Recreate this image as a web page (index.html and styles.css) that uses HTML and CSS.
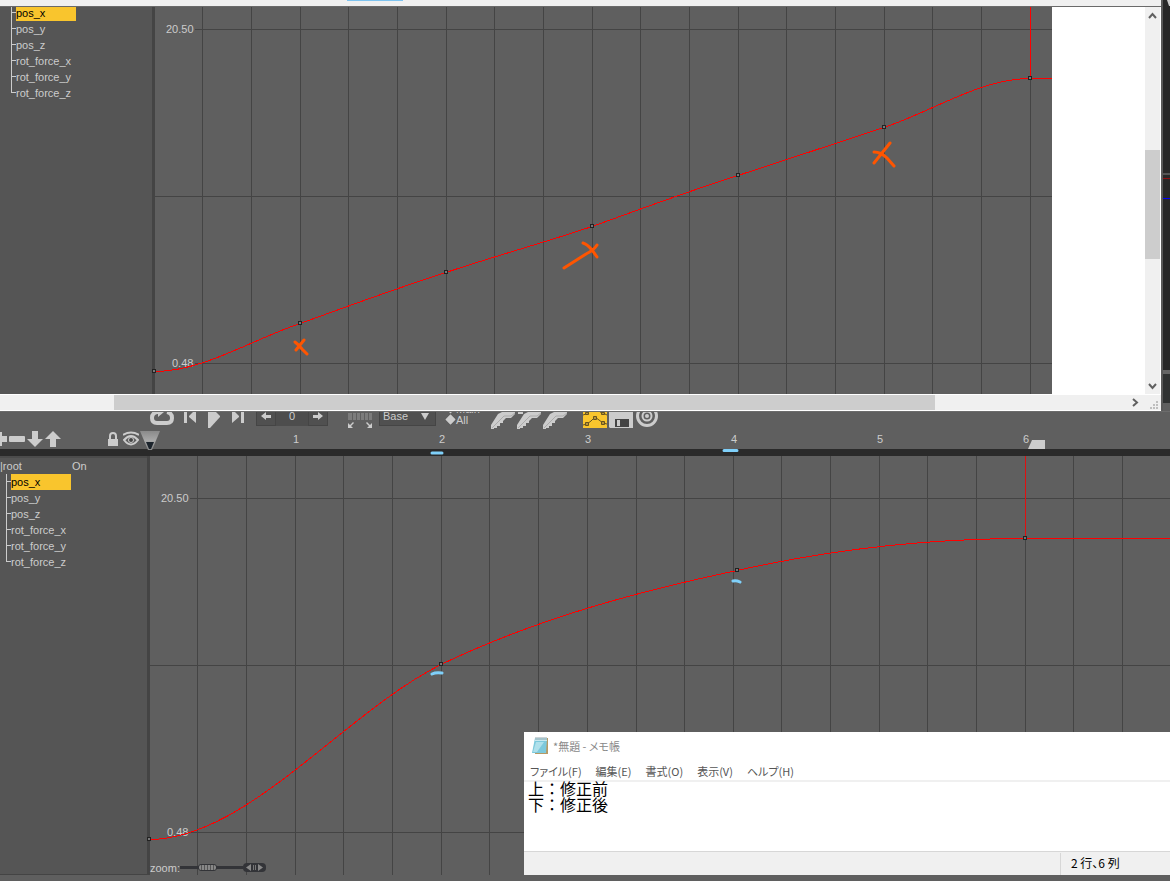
FILE: index.html
```
<!DOCTYPE html>
<html lang="ja">
<head>
  <meta charset="UTF-8" />
  <meta name="viewport" content="width=device-width, initial-scale=1.0"/>
  <title>Curve Editor</title>
  <link rel="stylesheet" href="styles.css">
</head>
<body>

<!-- Upper window -->
<section class="top">
  <div class="viewer">
    <div class="viewer-title"><span class="title-mark"></span></div>
    <div class="viewer-body">
      <ul class="tree tree-upper">
        <li class="selected"><span>pos_x</span></li>
        <li><span>pos_y</span></li>
        <li><span>pos_z</span></li>
        <li><span>rot_force_x</span></li>
        <li><span>rot_force_y</span></li>
        <li><span>rot_force_z</span></li>
      </ul>
      <div class="graph graph-upper">
        <svg class="curves">
          <g transform="translate(-152 -7)">
            <rect class="divider" x="152" y="7" width="3" height="400"/>
            <path class="grid" d="M202.5 7v400M251.5 7v400M300.5 7v400M348.5 7v400M397.5 7v400M446.5 7v400M494.5 7v400M543.5 7v400M592.5 7v400M640.5 7v400M689.5 7v400M738.5 7v400M786.5 7v400M835.5 7v400M884.5 7v400M932.5 7v400M981.5 7v400M1030.5 7v400M195 29.5H3000M155 196.5H3000M195 363.5H3000"/>
            <text x="166" y="33">20.50</text>
            <text x="172" y="367">0.48</text>
            <path class="curve" d="M154 371.5C203 371.5 251 340 300 323.5C349 306 397 288 446 272.5C495 256 543 243 592 226.5C641 209 689 191 738 175.5C787 159 835 144 884 127.5C933 111 981 78.5 1030 78.5H3000M1030.5 7V78"/>
            <path class="key" d="M152.5 369.5h3v3h-3zM298.5 321.5h3v3h-3zM444.5 270.5h3v3h-3zM590.5 224.5h3v3h-3zM736.5 173.5h3v3h-3zM882.5 125.5h3v3h-3zM1028.5 76.5h3v3h-3z"/>
            <path class="pen-orange" d="M295 342Q299 345 302 349L307 354M304 340L296 350M583 243Q587 244 592 250L597 257M597 245Q594 250 586 254L564 268M890 143L874 163M874 152Q881 152 887 158L894 166"/>
          </g>
        </svg>
      </div>
      <div class="blank"></div>
      <div class="vscroll">
        <button class="arrow" aria-label="Scroll up"><svg width="15" height="18"><path d="M4 11l3.5-4L11 11"/></svg></button>
        <div class="vthumb"></div>
        <button class="arrow arrow-end" aria-label="Scroll down"><svg width="15" height="18"><path d="M4 8l3.5 4L11 8"/></svg></button>
      </div>
    </div>
    <div class="hscroll">
      <div class="hthumb"></div>
      <button class="arrow" aria-label="Scroll right"><svg width="18" height="15"><path d="M7 4l4 3.5L7 11"/></svg></button>
      <svg class="grip" width="11" height="11"><path d="M1 8h2v2H1zM4 8h2v2H4zM7 8h2v2H7zM4 5h2v2H4zM7 5h2v2H7zM7 2h2v2H7z"/></svg>
    </div>
  </div>
  <svg class="backdrop">
    <rect width="8" height="403" fill="#282828"/>
    <path d="M4 0h4v6H6z" fill="#ccc"/>
    <rect y="173" width="8" height="2" fill="#555"/>
    <rect y="178" width="8" height="1" fill="#901010"/>
    <rect y="198" width="8" height="1" fill="#0000ff"/>
    <rect y="370" width="8" height="4" fill="#666"/>
    <rect y="374" width="8" height="29" fill="#303232"/>
  </svg>
</section>

<!-- Lower window: playback controls -->
<section class="toolbar">
  <button class="tool loop" aria-label="Loop"><svg width="24" height="20"><path class="thick" d="M8 0H7Q2 1 2 6Q2 11 7 11H17Q22 11 22 6Q22 1 17 0"/><path class="fill" d="M8 5V0h6z"/></svg></button>
  <button class="tool start" aria-label="First frame"><svg width="12" height="20"><path class="fill" d="M0 0h3v11H0zM12 0v11L5 5V4l4-4z"/></svg></button>
  <button class="tool" aria-label="Play"><svg width="12" height="20"><path class="fill" d="M0 0h8l4 4v1L2 16H0z"/></svg></button>
  <button class="tool" aria-label="Last frame"><svg width="12" height="20"><path class="fill" d="M0 0h3l4 4v1l-7 6zM9 0h3v11H9z"/></svg></button>
  <div class="stepper">
    <button aria-label="Previous key"><svg width="20" height="20"><path class="fill" d="M5 9l5-4v3h5v3h-5v2z"/></svg></button>
    <input type="text" value="0" aria-label="Frame">
    <button aria-label="Next key"><svg width="20" height="20"><path class="fill" d="M15 9l-5-4v3H5v3h5v2z"/></svg></button>
  </div>
  <button class="tool fit" aria-label="Fit range"><svg width="24" height="20"><path d="M0 1h4v7H0zM5 1h3v7H5zM9 1h3v7H9zM13 1h3v7h-3zM17 1h3v7h-3zM21 1h3v7h-3z" fill="#7c7c7c"/><path class="fill" d="M0 16v-5l2 2 3-3 1 1-3 3 2 2zM24 16v-5l-2 2-3-3-1 1 3 3-2 2z"/></svg></button>
  <div class="layer">
    <select aria-label="Layer"><option>Base</option></select>
    <svg width="8" height="7"><path class="fill" d="M0 0h8L4 7z"/></svg>
  </div>
  <div class="scope">
    <label><input type="radio" name="scope">Main</label>
    <label><input type="radio" name="scope" checked>All</label>
  </div>
  <button class="tool key-btn" aria-label="Set key"><svg width="24" height="20"><path class="fill" d="M7 2l4-2h13v2l-4 4h-5l-3 3v2H9v3H6v2H3v1H0v-4z"/><path class="edge" d="M1 16L13 4h7l4-3"/></svg></button>
  <button class="tool key-btn" aria-label="Add key"><svg width="24" height="20"><path class="fill" d="M1 0h5v2H1zM7 2l4-2h13v2l-4 4h-5l-3 3v2H9v3H6v2H3v1H0v-4z"/><path class="edge" d="M1 16L13 4h7l4-3"/></svg></button>
  <button class="tool key-btn" aria-label="Delete key"><svg width="24" height="20"><path class="fill" d="M7 2l4-2h13v2l-4 4h-5l-3 3v2H9v3H6v2H3v1H0v-4z"/><path class="edge" d="M1 16L13 4h7l4-3"/></svg></button>
  <button class="tool curve-btn" aria-label="Curve view"><svg width="24" height="20"><rect width="24" height="16" fill="#f9c52d"/><path d="M0 3l3-1 3-2M17 0l3 1 4 2M0 13l4-1 4-3 4-4 4 3 4 3 4 1" fill="none" stroke="#665321"/><path d="M2.5 .5h3v2h-3zM18.5 .5h3v2h-3zM2.500 10.500h3v3h-3zM10.500 4.500h3v3h-3zM18.500 9.500h3v3h-3z" fill="#b99432" stroke="#665321"/></svg></button>
  <button class="tool save-btn" aria-label="Save"><svg width="24" height="20"><path class="fill" d="M0 0h24v16H1l-1-1z"/><path d="M6 7h14v8H6z" fill="#444"/><path class="fill" d="M8 8h3v6H8z"/></svg></button>
  <button class="tool target-btn" aria-label="Target"><svg width="22" height="20"><circle class="ring" cx="11" cy="4" r="9.5"/><circle class="thin" cx="11" cy="4" r="4.5"/><circle class="fill" cx="11" cy="4" r="2"/></svg></button>
</section>

<section class="timeline">
  <div class="track-tools">
    <button class="tool" aria-label="Add"><svg width="7" height="18"><path class="fill" d="M0 1h2v4h5v6H2v4H0z"/></svg></button>
    <button class="tool" aria-label="Remove"><svg width="16" height="18"><rect class="fill" y="5" width="16" height="6" rx="1"/></svg></button>
    <button class="tool" aria-label="Move down"><svg width="16" height="18"><path class="fill" d="M5 0h6v8h5l-8 8-8-8h5z"/></svg></button>
    <button class="tool" aria-label="Move up"><svg width="16" height="18"><path class="fill" d="M8 0l8 8h-5v8H5V8H0z"/></svg></button>
    <button class="tool lock" aria-label="Lock"><svg width="10" height="18"><path class="fill" d="M0 8h10v7H0z"/><path class="thin" d="M2 8V5q0-3 3-3t3 3v3"/></svg></button>
    <button class="tool eye" aria-label="Visible"><svg width="16" height="18"><path class="thin" d="M0 4Q8-1 16 4M1 9Q8 1 15 9Q8 18 1 9z"/><circle cx="8" cy="9" r="2.5" fill="#444" stroke="#ccc"/></svg></button>
  </div>
  <svg class="playhead" width="20" height="21"><defs><linearGradient id="head" x2="0" y2="1"><stop offset="0" stop-color="#8a8a8a"/><stop offset=".5" stop-color="#a8a8a8"/><stop offset="1" stop-color="#888"/></linearGradient></defs><path d="M0 1h20l-8 19H8z" fill="url(#head)"/><path d="M6 12h8l-3 7H9z" fill="#1c242c"/></svg>
  <div class="ruler">
    <span>1</span><span>2</span><span>3</span><span>4</span><span>5</span><span>6</span>
  </div>
  <svg class="range-end" width="17" height="9"><path class="fill" d="M4 0h13v9H0z"/></svg>
</section>

<div class="time-bar">
  <svg width="100%" height="7"><path class="pen-blue" d="M432 4H442M724 1.500H737"/></svg>
</div>

<section class="editor">
  <div class="tree-panel">
    <div class="root-row"><span class="root-name">|root</span><span>On</span></div>
    <ul class="tree tree-lower">
      <li class="selected"><span>pos_x</span></li>
      <li><span>pos_y</span></li>
      <li><span>pos_z</span></li>
      <li><span>rot_force_x</span></li>
      <li><span>rot_force_y</span></li>
      <li><span>rot_force_z</span></li>
    </ul>
  </div>
  <div class="graph graph-lower">
    <svg class="curves">
      <g transform="translate(-147 -456)">
        <rect class="divider" x="147" y="456" width="3" height="2000"/>
        <path class="grid" d="M197.5 456v2000M246.5 456v2000M295.5 456v2000M343.5 456v2000M392.5 456v2000M441.5 456v2000M489.5 456v2000M538.5 456v2000M587.5 456v2000M636.5 456v2000M684.5 456v2000M733.5 456v2000M781.5 456v2000M830.5 456v2000M879.5 456v2000M927.5 456v2000M976.5 456v2000M1025.5 456v2000M1073.5 456v2000M1122.5 456v2000M190 498.5H3000M150 665.5H3000M190 832.5H3000"/>
        <text x="161" y="502">20.50</text>
        <text x="167" y="836">0.48</text>
        <path class="curve" d="M149 839.5C246 839.5 344 713 441 664.5C538 618 640 591 737 570.5C833 549 930 538.5 1025 538.5H3000"/>
        <path class="curve-end" d="M1025.5 456V538"/>
        <path class="key" d="M147.5 837.5h3v3h-3zM439.5 662.5h3v3h-3zM735.5 568.5h3v3h-3zM1023.5 536.5h3v3h-3z"/>
        <path class="pen-blue" d="M432 674Q436 672 442 673M733 581Q736 580 740 582"/>
      </g>
    </svg>
    <div class="zoom">
      <label for="zoom">zoom:</label>
      <input type="range" id="zoom" min="0" max="100" value="42">
      <button aria-label="Pan"><svg width="23" height="9"><rect width="23" height="9" rx="4" fill="#333438"/><path d="M8 1v7L3 4.5zM15 1v7l5-3.5z" fill="#888"/><path d="M10.5 2v5M12.5 2v5" stroke="#777"/></svg></button>
    </div>
  </div>

  <div class="notepad">
    <div class="notepad-title">
      <svg width="16" height="17"><path d="M4 1h12v16H3z" fill="#b59a66"/><path d="M3 1h12l-1 15H0z" fill="#7cc9dc"/><path d="M3 1h12v3H3z" fill="#c8e9f0"/><path d="M4 5h8L5 15H1z" fill="#aee0eb"/><path d="M4 0v3M6 0v3M8 0v3M10 0v3M12 0v3M14 0v3" stroke="#55707a" stroke-width=".6"/></svg>
      <span>*無題 - メモ帳</span>
    </div>
    <div class="notepad-menu">
      <button>ファイル(F)</button>
      <button>編集(E)</button>
      <button>書式(O)</button>
      <button>表示(V)</button>
      <button>ヘルプ(H)</button>
    </div>
    <textarea aria-label="本文" spellcheck="false">上：修正前
下：修正後</textarea>
    <div class="notepad-status"><span>2 行、6 列</span></div>
  </div>
</section>

</body>
</html>
```
FILE: styles.css
```
* {
  box-sizing: border-box;
}

body {
  margin: 0;
  min-height: 100vh;
  display: flex;
  flex-direction: column;
  background-color: #5f5f5f;
  color: #ccc;
  font-family: "Liberation Sans", Arial, sans-serif;
  font-size: 11px;
  overflow: hidden;
}

button {
  border: none;
  padding: 0;
  background: none;
  color: inherit;
  font: inherit;
}

svg {
  display: block;
}

/* upper window */
.top {
  display: flex;
}

.viewer {
  flex: 1;
  min-width: 0;
  border-right: 2px solid #5a5a5a;
}

.viewer-title {
  height: 7px;
  background-color: #f0f0f0;
  border-bottom: 1px solid #6a6a6a;
}

.title-mark {
  display: block;
  width: 56px;
  height: 1px;
  margin-left: 347px;
  background-color: #7fc4f0;
}

.viewer-body {
  display: flex;
  height: 387px;
  background-color: #fff;
}

.blank {
  width: 93px;
}

.backdrop {
  width: 7px;
  height: 411px;
}

.vscroll {
  display: flex;
  flex-direction: column;
  width: 16px;
  background-color: #f0f0f0;
  border-right: 1px solid #fff;
}

.vthumb {
  height: 109px;
  margin-top: 125px;
  background-color: #cdcdcd;
}

.arrow path {
  fill: none;
  stroke: #606060;
  stroke-width: 2;
}

.arrow-end {
  margin-top: auto;
}

.hscroll {
  display: flex;
  align-items: center;
  height: 17px;
  background-color: #f0f0f0;
  border-top: 1px solid #fff;
  border-bottom: 1px solid #fff;
}

.hthumb {
  flex: 1;
  height: 15px;
  margin-left: 114px;
  margin-right: 191px;
  background-color: #cdcdcd;
}

.grip {
  margin-left: 5px;
  margin-right: 1px;
  margin-top: 4px;
  fill: #bfbfbf;
}

/* track tree */
.tree {
  flex: none;
  list-style: none;
  margin: 0;
  padding: 0;
  background-color: #555;
  overflow: hidden;
}

.tree li {
  position: relative;
  height: 16px;
  line-height: 16px;
  border-left: 1px solid #ccc;
  padding-left: 4px;
}

.tree li::before {
  content: "";
  position: absolute;
  left: 0;
  top: 7px;
  width: 4px;
  height: 1px;
  background-color: #ccc;
}

.tree li:last-child {
  height: 8px;
}

.tree span {
  display: block;
  width: 60px;
}

.tree .selected span {
  background-color: #f9c52d;
  color: #000;
}

.tree-upper {
  width: 152px;
  padding-left: 11px;
}

.tree-upper .selected {
  margin-top: -2px;
}

.tree-lower {
  padding-left: 6px;
  padding-bottom: 10px;
}

/* graphs */
.graph {
  position: relative;
  flex: 1;
  min-width: 0;
  background-color: #5f5f5f;
  overflow: hidden;
}

.curves {
  position: absolute;
  width: 100%;
  height: 100%;
}

.curves text {
  fill: #ccc;
}

.divider {
  fill: #444;
}

.grid,
.curve,
.curve-end,
.key {
  fill: none;
  stroke: #444;
  shape-rendering: crispEdges;
}

.curve {
  stroke: #ff0000;
}

.curve-end {
  stroke: #e01010;
}

.key {
  fill: #777;
  stroke: #222;
}

.pen-orange,
.pen-blue {
  fill: none;
  stroke: #ff5500;
  stroke-width: 3;
  stroke-linecap: round;
}

.pen-blue {
  stroke: #7fd0fa;
}

/* toolbar */
.toolbar {
  display: flex;
  height: 20px;
  padding-left: 150px;
  border-top: 1px solid #6c6c6c;
  overflow: hidden;
}

.tool {
  display: flex;
  flex: none;
  align-items: flex-start;
}

.fill {
  fill: #ccc;
}

.thick,
.thin,
.ring {
  fill: none;
  stroke: #ccc;
  stroke-width: 4;
}

.thin {
  stroke-width: 2;
}

.ring {
  stroke-width: 3;
}

.edge {
  fill: none;
  stroke: #aaa;
}

.toolbar > .tool {
  margin-right: 12px;
}

.toolbar > .loop {
  margin-right: 10px;
}

.stepper {
  display: flex;
  height: 20px;
  margin-top: -6px;
  margin-right: 20px;
}

.stepper button,
.layer select {
  background-color: #505050;
  border: 1px solid #454545;
}

.stepper button {
  width: 20px;
}

.stepper svg {
  margin-left: -1px;
}

.stepper input {
  width: 32px;
  padding: 0;
  border: none;
  background-color: #4d4d4d;
  color: #ccc;
  font: inherit;
  text-align: center;
}

.toolbar > .fit {
  margin-right: 7px;
}

.layer {
  position: relative;
  margin-top: -6px;
  margin-right: 10px;
}

.layer select {
  appearance: none;
  width: 57px;
  height: 20px;
  padding: 0 3px;
  color: #ccc;
  font: inherit;
}

.layer svg {
  position: absolute;
  right: 7px;
  top: 7px;
}

.scope {
  width: 45px;
  margin-top: -9px;
}

.scope label {
  display: flex;
  align-items: center;
  gap: 1px;
  height: 11px;
}

.scope input {
  appearance: none;
  width: 7px;
  height: 7px;
  margin: 1px;
  border: 1px solid #ccc;
  transform: rotate(45deg);
}

.scope input:checked {
  background-color: #ccc;
}

.toolbar > .key-btn,
.toolbar > .curve-btn {
  margin-right: 2px;
}

.toolbar > .curve-btn {
  margin-left: 14px;
}

.toolbar > .save-btn {
  margin-right: 3px;
}

/* ruler */
.timeline {
  position: relative;
  display: flex;
  height: 18px;
}

.track-tools {
  display: flex;
  flex: none;
  gap: 2px;
  width: 150px;
}

.track-tools .lock {
  margin-left: 45px;
}

.track-tools .eye {
  margin-left: 3px;
}

.playhead {
  position: absolute;
  left: 140px;
  top: -1px;
  z-index: 1;
}

.ruler {
  display: grid;
  grid-template-columns: repeat(6, 146px);
  margin-left: 73px;
  line-height: 17px;
  text-align: center;
}

.range-end {
  position: absolute;
  left: 1028px;
  bottom: 0;
}

.time-bar {
  height: 7px;
  background-color: #2a2a2a;
}

/* lower editor */
.editor {
  position: relative;
  display: flex;
  flex: 1;
  margin-bottom: 6px;
}

.tree-panel {
  width: 147px;
  background-color: #555;
  border-top: 2px solid #4b4b4b;
  border-bottom: 1px solid #444;
}

.root-row {
  display: flex;
  height: 16px;
  line-height: 16px;
}

.root-name {
  width: 72px;
}

.zoom {
  position: absolute;
  left: 3px;
  bottom: 0;
  display: flex;
  align-items: center;
  height: 15px;
}

.zoom input {
  appearance: none;
  width: 63px;
  height: 3px;
  margin: 0;
  background-color: #333438;
}

.zoom input::-webkit-slider-thumb {
  appearance: none;
  width: 19px;
  height: 7px;
  border: 1px solid #333438;
  border-radius: 3px;
  background: repeating-linear-gradient(90deg, #888 0 2px, #555 2px 3px);
}

/* notepad window */
.notepad {
  position: absolute;
  left: 524px;
  right: 0;
  bottom: 0;
  display: flex;
  flex-direction: column;
  background-color: #fff;
  font-family: "Noto Sans CJK JP", sans-serif;
  font-feature-settings: "palt";
}

.notepad-title {
  display: flex;
  align-items: center;
  gap: 5px;
  height: 29px;
  padding-left: 8px;
  padding-bottom: 2px;
  color: #888;
}

.notepad-menu {
  display: flex;
  align-items: center;
  gap: 14px;
  height: 21px;
  padding-left: 6px;
  border-bottom: 2px solid #f0f0f0;
  color: #555;
}

.notepad textarea {
  height: 71px;
  margin-top: -2px;
  padding: 0 4px;
  border: none;
  outline: none;
  resize: none;
  background: none;
  color: #000;
  font-family: "Noto Sans CJK JP", monospace;
  font-size: 16px;
  line-height: 16px;
}

.notepad-status {
  display: flex;
  justify-content: flex-end;
  height: 24px;
  padding-top: 1px;
  background-color: #f0f0f0;
  border-top: 1px solid #d7d7d7;
  color: #000;
}

.notepad-status span {
  width: 110px;
  padding-left: 10px;
  border-left: 1px solid #d7d7d7;
  font-size: 12px;
  line-height: 20px;
}
```
